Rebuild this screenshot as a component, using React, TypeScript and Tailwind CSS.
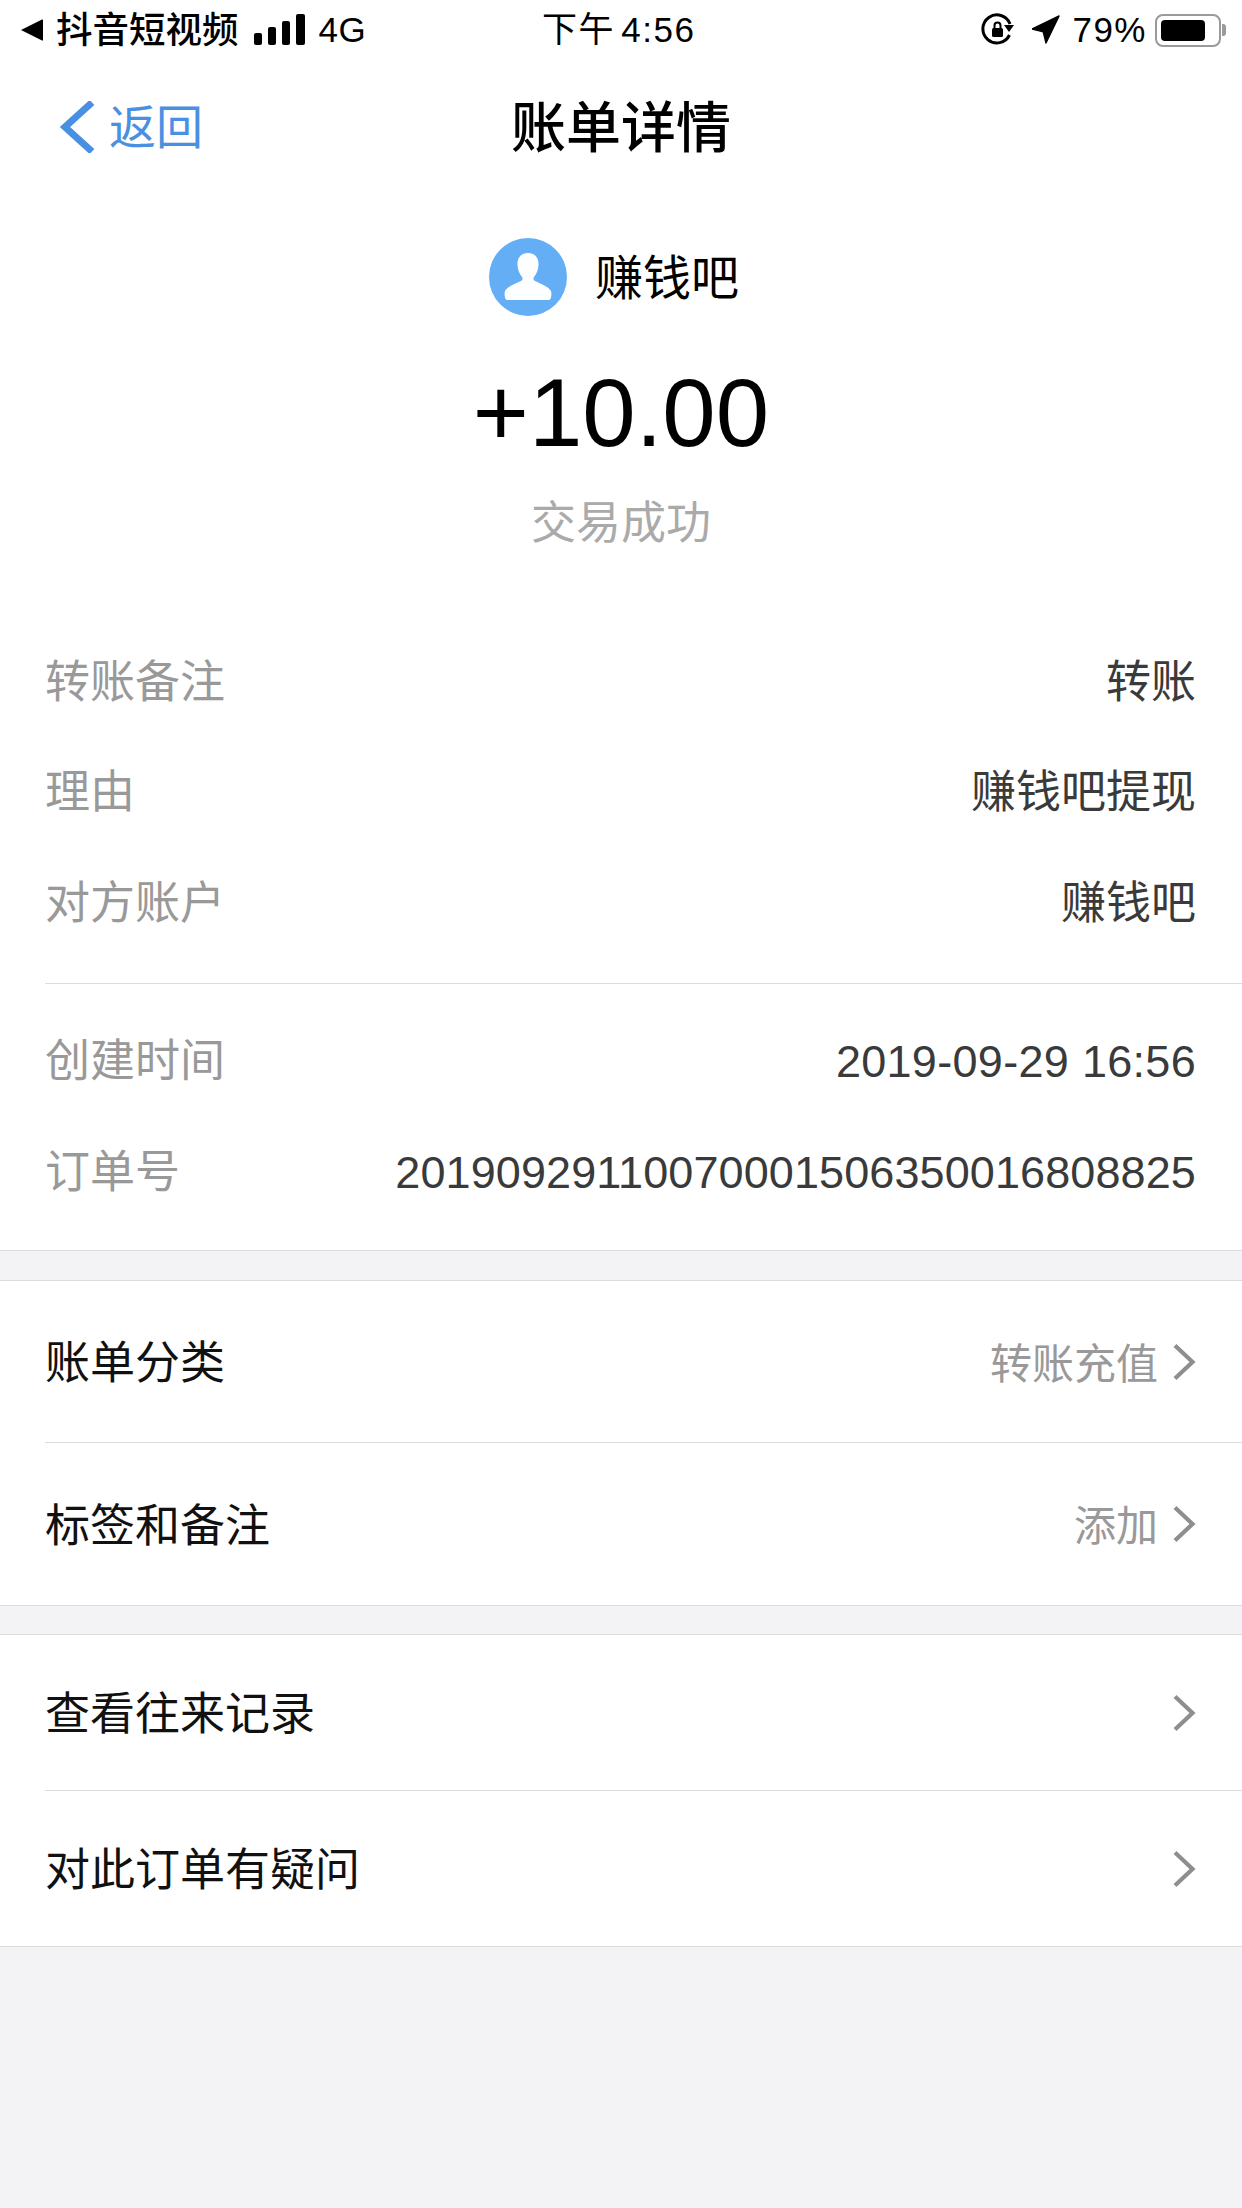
import { ReactNode } from 'react';

const cjk = '"Liberation Sans", "Noto Sans CJK SC", sans-serif';

const Chevron = () => (
  <svg width="24" height="38" viewBox="0 0 24 38" fill="none" className="shrink-0">
    <path d="M3 2.500 20.500 19 3 35.500" stroke="#8e8e8e" strokeWidth="4.200" />
  </svg>
);

const StatusBar = () => (
  <div className="h-[60px] flex items-center justify-between relative text-black text-[35px] pl-[20px] pr-[16px]">
    <div className="flex items-center">
      <svg width="24" height="24" viewBox="0 0 24 24" className="mr-[12px]">
        <path d="M1 12 22 1.500c.6-.3 1 0 1 .6v19.800c0 .6-.4.9-1 .6Z" fill="#000" />
      </svg>
      <span className="text-[36.500px] font-medium leading-none pt-[2px]">抖音短视频</span>
      <svg width="52" height="32" viewBox="0 0 52 32" fill="#000" className="ml-[15px]">
        <rect x="0" y="19" width="8" height="12" rx="2" />
        <rect x="14" y="13" width="8" height="18" rx="2" />
        <rect x="28" y="7" width="8" height="24" rx="2" />
        <rect x="42" y="0" width="9" height="31" rx="2" />
      </svg>
      <span className="ml-[13px] tracking-[0.5px]">4G</span>
    </div>
    <span className="absolute left-[542px] top-[4px] tracking-[1.500px] [word-spacing:-5px]">下午 4:56</span>
    <div className="flex items-center">
      <svg width="34" height="34" viewBox="0 0 34 34" fill="none">
        <path d="M28.500 22A14 14 0 1 1 29 11" stroke="#000" strokeWidth="3" />
        <path d="M23 12h10l-5 7Z" fill="#000" />
        <rect x="11" y="15" width="11" height="9" rx="1.500" fill="#000" />
        <path d="M13.500 15v-2.500a3 3 0 0 1 6 0V15" stroke="#000" strokeWidth="2" />
      </svg>
      <svg width="28" height="30" viewBox="0 0 30 32" className="ml-[17px]">
        <path d="M0 15 29 1 15 30 12 18Z" fill="#000" stroke="#000" strokeWidth="1.500" strokeLinejoin="round" />
      </svg>
      <span className="ml-[12px] tracking-[1.500px]">79%</span>
      <div className="ml-[8px] w-[66px] h-[33px] rounded-[8px] border-[2px] border-[#9a9a9a] p-[4px]">
        <div className="w-[44px] h-full bg-black rounded-[4px]" />
      </div>
      <div className="ml-[1px] w-[4px] h-[12px] bg-[#9a9a9a] rounded-r-[3px]" />
    </div>
  </div>
);

const NavBar = () => (
  <div className="h-[95px] flex items-center justify-center relative">
    <div className="absolute left-[59px] top-[41px] flex items-center">
      <svg width="36" height="52" viewBox="0 0 36 52" fill="none">
        <path d="M33 1.500 6 26l27 24.500" stroke="#4a90e2" strokeWidth="7" />
      </svg>
      <span className="text-[47px] text-[#4a90e2] ml-[14px] leading-none">返回</span>
    </div>
    <h1 className="text-[55px] font-medium text-black mt-[42px]">账单详情</h1>
  </div>
);

const InfoRow = ({ label, value, className, valueClass = '' }: { label: string; value: string; className: string; valueClass?: string }) => (
  <div className={`flex items-center justify-between pl-[45px] pr-[46px] ${className}`}>
    <span className="text-[45px] text-[#999999]">{label}</span>
    <span className={`text-[45px] text-[#3a3a3a] ${valueClass}`}>{value}</span>
  </div>
);

const LinkRow = ({ label, value, className }: { label: string; value?: string; className: string }) => (
  <div className={`flex items-center pr-[46px] ${className}`}>
    <span className="text-[45px] text-[#111111] flex-1 pt-[5px]">{label}</span>
    {value && <span className="text-[42px] text-[#999999] mr-[14px] pt-[5px]">{value}</span>}
    <Chevron />
  </div>
);

const Card = ({ children, className = '' }: { children: ReactNode; className?: string }) => (
  <div className={`bg-white border-y-[1.500px] border-[#dcdcdc] pl-[45px] ${className}`}>{children}</div>
);

export default function App() {
  return (
    <div className="w-[1242px] h-[2208px] bg-[#f3f3f5] overflow-hidden" style={{ fontFamily: cjk }}>
      <div className="bg-white h-[1251px] border-b-[1.500px] border-[#dcdcdc]">
        <StatusBar />
        <NavBar />
        <div className="flex flex-col items-center">
          <div className="flex items-center mt-[82px] h-[80px] mr-[14px]">
            <svg width="78" height="78" viewBox="0 0 78 78">
              <circle cx="39" cy="39" r="39" fill="#64aef5" />
              <path d="M39 15c-7 0-11 5-10.500 12 .3 5 2 9 4.500 12 1 2 .5 3-1 4-4 2-13 5-16 10-.8 2-.5 9 2 9h42c2.500 0 2.800-7 2-9-3-5-12-8-16-10-1.500-1-2-2-1-4 2.500-3 4.200-7 4.500-12 .5-7-3.500-12-10.500-12Z" fill="#fdfeff" />
            </svg>
            <span className="text-[48px] text-black ml-[28px] pt-[3px]">赚钱吧</span>
          </div>
          <div className="text-[96px] text-black leading-none mt-[48px]">+10.00</div>
          <div className="text-[45px] text-[#aaaaaa] mt-[29px]">交易成功</div>
        </div>
        <div className="mt-[70px]">
          <InfoRow label="转账备注" value="转账" className="h-[110px]" />
          <InfoRow label="理由" value="赚钱吧提现" className="h-[111px]" />
          <InfoRow label="对方账户" value="赚钱吧" className="h-[110px]" />
        </div>
        <div className="ml-[45px] mt-[24px] h-[1.500px] bg-[#dcdcdc]" />
        <div className="mt-[22px]">
          <InfoRow label="创建时间" value="2019-09-29 16:56" valueClass="tracking-[0.3px]" className="h-[111px]" />
          <InfoRow label="订单号" value="20190929110070001506350016808825" valueClass="tracking-[0.1px]" className="h-[111px]" />
        </div>
      </div>
      <Card className="mt-[29px]">
        <LinkRow label="账单分类" value="转账充值" className="h-[162px] border-b-[1.500px] border-[#dcdcdc]" />
        <LinkRow label="标签和备注" value="添加" className="h-[162px]" />
      </Card>
      <Card className="mt-[28px]">
        <LinkRow label="查看往来记录" className="h-[156px] border-b-[1.500px] border-[#dcdcdc]" />
        <LinkRow label="对此订单有疑问" className="h-[155px]" />
      </Card>
    </div>
  );
}
